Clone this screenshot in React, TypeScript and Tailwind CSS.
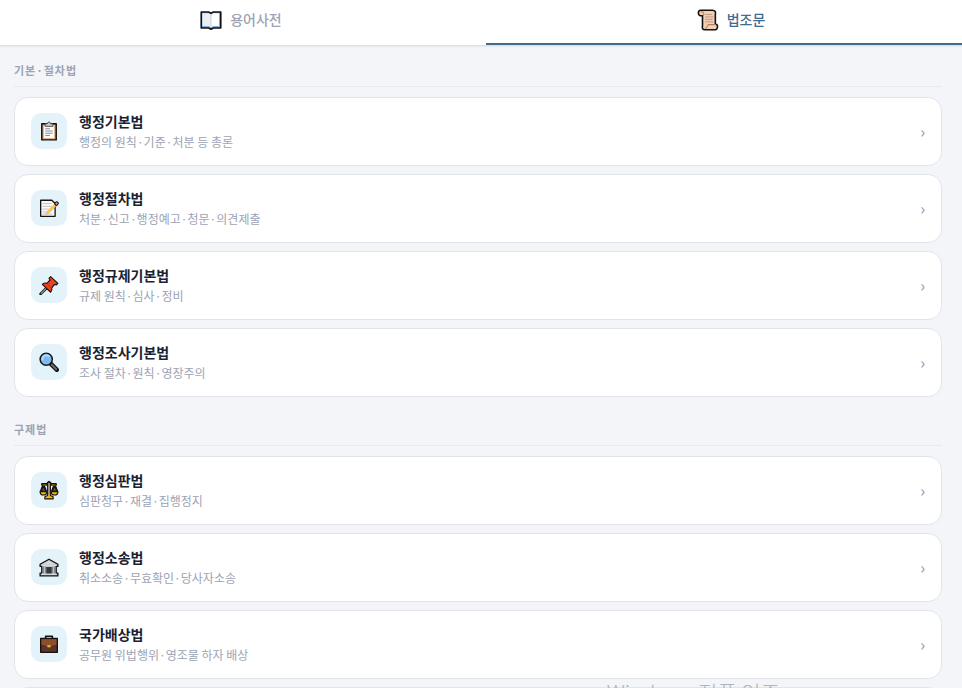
import type { ReactNode } from "react";

type Law = { name: string; desc: string; icon: ReactNode };
type Section = { title: string; laws: Law[] };

function Svg({ children, large = false }: { children: ReactNode; large?: boolean }) {
  return (
    <svg
      viewBox="0 0 36 36"
      aria-hidden="true"
      className={large ? "h-[22px] w-[22px] shrink-0" : "h-5 w-5 shrink-0"}
      strokeLinejoin="round"
      strokeLinecap="round"
    >
      {children}
    </svg>
  );
}

const BookIcon = () => (
  <Svg large>
    <path d="M2 5h12l4 2 4-2h12v26H22l-4 2-4-2H2z" fill="#7fb0e0" stroke="#111" strokeWidth="2.600" />
    <path d="M4 7h10l4 2v21l-4-2H4z" fill="#ededf0" />
    <path d="M31 7h-9l-4 2v21l4-2h9z" fill="#fff" />
    <path d="M18 9v20" stroke="#c3cad3" strokeWidth="1.400" />
  </Svg>
);

const ScrollIcon = () => (
  <Svg large>
    <path
      d="M6 2h19c5 0 6 3 5 7v16h1c4 0 3 9-1 9H13c-4 0-5-3-4-7V11H6C1 11 1 2 6 2z"
      fill="#f5cfb4"
      stroke="#15110f"
      strokeWidth="2.600"
    />
    <path d="M7 4.500c4 0 5 3 3.500 6M14 31.500c3 0 2-5 5-6h11" fill="none" stroke="#ad806b" strokeWidth="1.800" />
    <path d="M14 9h10M14 13h12M14 17h11M14 21h12" stroke="#b28e7b" strokeWidth="1.300" />
  </Svg>
);

const ClipboardIcon = () => (
  <Svg>
    <path d="M5 5h26v29H5z" fill="#d99a68" stroke="#111" strokeWidth="2.600" />
    <path d="M8.500 8h19v23h-19z" fill="#fff" />
    <path d="M11 9V5h4c0-4 6-4 6 0h4v4z" fill="#c3c8cc" stroke="#3a3a3a" strokeWidth="1.500" />
    <path d="M12 14h7M12 18h12M12 22h12M12 26h7" stroke="#7b838a" strokeWidth="1.700" />
  </Svg>
);

const MemoIcon = () => (
  <Svg>
    <path d="M3 4h20l6 6v23H3z" fill="#fafafa" stroke="#151515" strokeWidth="2.400" />
    <path d="M7 10h14M7 15h15M7 20h10M7 25h7M7 29h16" stroke="#b4b7ba" strokeWidth="1.500" />
    <path d="M15 24 29 10l3 3-14 14-5 2z" fill="#ffc84a" stroke="#e5b04c" strokeWidth="1" />
    <path d="m28 10 3-3c2-1 5 2 3 4l-3 3z" fill="#e39a96" stroke="#181818" strokeWidth="2" />
  </Svg>
);

const PinIcon = () => (
  <Svg>
    <path d="m15 22-12 12" stroke="#111" strokeWidth="5" />
    <path d="m15 22-11 11" stroke="#9eb0a6" strokeWidth="2" />
    <path
      d="m21 3 13 12-3 3-3-1-5 6c1 4 0 6-2 8L6 17c2-3 5-3 8-2l6-6-2-3z"
      fill="#ed401b"
      stroke="#171313"
      strokeWidth="2"
    />
    <path d="m15 16 7 7" stroke="#ad2813" strokeWidth="1.500" />
  </Svg>
);

const SearchIcon = () => (
  <Svg>
    <path d="m21 21 11 11" stroke="#111" strokeWidth="8" />
    <path d="m23 23 8 8" stroke="#6b6c6e" strokeWidth="3.500" />
    <circle cx="13" cy="13" r="11" fill="#7dbaf0" stroke="#151515" strokeWidth="2.600" />
    <path d="M6 14C6 7 13 4 18 8" stroke="#b4dbfb" strokeWidth="3" fill="none" />
  </Svg>
);

const ScalesIcon = () => (
  <Svg>
    <path d="M6 8h8l4-4 4 4h8" fill="none" stroke="#111" strokeWidth="5" />
    <path d="M8 8 3 21h10zM28 8l-5 13h10z" fill="#55544c" stroke="#151515" strokeWidth="3.500" />
    <path d="M2 21h12c0 8-12 8-12 0zM22 21h12c0 8-12 8-12 0z" fill="#f8b700" stroke="#151515" strokeWidth="2" />
    <path d="M15.500 5h5v23l5 2v4h-15v-4l5-2z" fill="#f8b700" stroke="#151515" strokeWidth="2" />
    <path d="M18 7v18" stroke="#8b8794" strokeWidth="3" />
    <path d="M7 9h6M23 9h6" stroke="#d79900" strokeWidth="1.500" />
  </Svg>
);

const BuildingIcon = () => (
  <Svg>
    <path d="M2 13 18 4l16 9v4h-3v12h3v5H2v-5h3V17H2z" fill="#c7cbce" stroke="#151515" strokeWidth="2.400" />
    <path d="M7 13 18 7l11 6z" fill="#d9dcde" />
    <path d="M13 18h10v12H13z" fill="#34383a" />
    <path d="M8 18v11M11.500 18v11M24.500 18v11M28 18v11" stroke="#6d7275" strokeWidth="1.500" />
    <path d="M5 15h26M5 31h26" stroke="#dfe2e4" strokeWidth="1.500" />
  </Svg>
);

const BriefcaseIcon = () => (
  <Svg>
    <path d="M12 8V4h12v4" fill="none" stroke="#17110e" strokeWidth="3" />
    <path d="M3 8h30v25H3z" fill="#5c3428" stroke="#17110e" strokeWidth="2.400" />
    <path d="M4.500 9.500h27v10L22 22h-8l-9.500-2.500z" fill="#8b4e2d" />
    <path d="M4 20 14 23h8l10-3" fill="none" stroke="#4b2b20" strokeWidth="1.200" />
    <path d="M15 20h6v4h-6z" fill="#efb51c" />
  </Svg>
);

const sections: Section[] = [
  {
    title: "기본·절차법",
    laws: [
      { name: "행정기본법", desc: "행정의 원칙·기준·처분 등 총론", icon: <ClipboardIcon /> },
      { name: "행정절차법", desc: "처분·신고·행정예고·청문·의견제출", icon: <MemoIcon /> },
      { name: "행정규제기본법", desc: "규제 원칙·심사·정비", icon: <PinIcon /> },
      { name: "행정조사기본법", desc: "조사 절차·원칙·영장주의", icon: <SearchIcon /> },
    ],
  },
  {
    title: "구제법",
    laws: [
      { name: "행정심판법", desc: "심판청구·재결·집행정지", icon: <ScalesIcon /> },
      { name: "행정소송법", desc: "취소소송·무효확인·당사자소송", icon: <BuildingIcon /> },
      { name: "국가배상법", desc: "공무원 위법행위·영조물 하자 배상", icon: <BriefcaseIcon /> },
    ],
  },
];

function LawCard({ law }: { law: Law }) {
  return (
    <button
      type="button"
      className="flex w-full items-center gap-3 rounded-[14px] border border-[#e1e5eb] bg-white px-4 pt-[13px] pb-[15px] text-left"
    >
      <span className="flex h-9 w-9 shrink-0 items-center justify-center rounded-[10px] bg-[#e4f2f9]">{law.icon}</span>
      <span className="flex min-w-0 flex-1 flex-col gap-[3px]">
        <span className="text-sm leading-5 font-bold text-[#1a2233]">{law.name}</span>
        <span className="text-xs leading-4 text-[#9ca3b4]">{law.desc}</span>
      </span>
      <span aria-hidden="true" className="text-base leading-5 text-[#8f97a8]">
        ›
      </span>
    </button>
  );
}

export default function App() {
  return (
    <div className="relative h-screen overflow-hidden bg-[#f3f5f9] font-['Noto_Sans_CJK_KR',sans-serif]">
      <nav className="-mr-[14px] -ml-1 flex bg-white shadow-sm">
        <button
          type="button"
          className="flex flex-1 items-center justify-center gap-2 border-b-2 border-transparent pt-2 pb-[11px] text-sm leading-6 font-medium text-[#9ca3b4]"
        >
          <BookIcon />
          <span className="pb-0.5 leading-[22px]">용어사전</span>
        </button>
        <button
          type="button"
          aria-current="page"
          className="flex flex-1 items-center justify-center gap-2 border-b-2 border-[#456b8a] pt-2 pb-[11px] text-sm leading-6 font-medium text-[#3f6c91]"
        >
          <ScrollIcon />
          <span className="pb-0.5 leading-[22px]">법조문</span>
        </button>
      </nav>

      <main className="flex flex-col gap-6 pt-[17px] pr-5 pl-3.5">
        {sections.map((section) => (
          <section key={section.title}>
            <h2 className="mb-2.5 border-b border-[#e6ebf1] pb-2 text-[11px] leading-4 font-bold tracking-[1px] text-[#9ca3b4]">
              {section.title}
            </h2>
            <div className="flex flex-col gap-2">
              {section.laws.map((law) => (
                <LawCard key={law.name} law={law} />
              ))}
            </div>
          </section>
        ))}
        <div className="-mt-4 h-16 rounded-[14px] border border-[#e1e5eb] bg-[#f6f7f9]" />
      </main>

      <p className="pointer-events-none absolute right-[182px] -bottom-[18px] text-[21px] leading-7 font-light text-[#b0b3b8]">
        Windows 정품 인증
      </p>
    </div>
  );
}
